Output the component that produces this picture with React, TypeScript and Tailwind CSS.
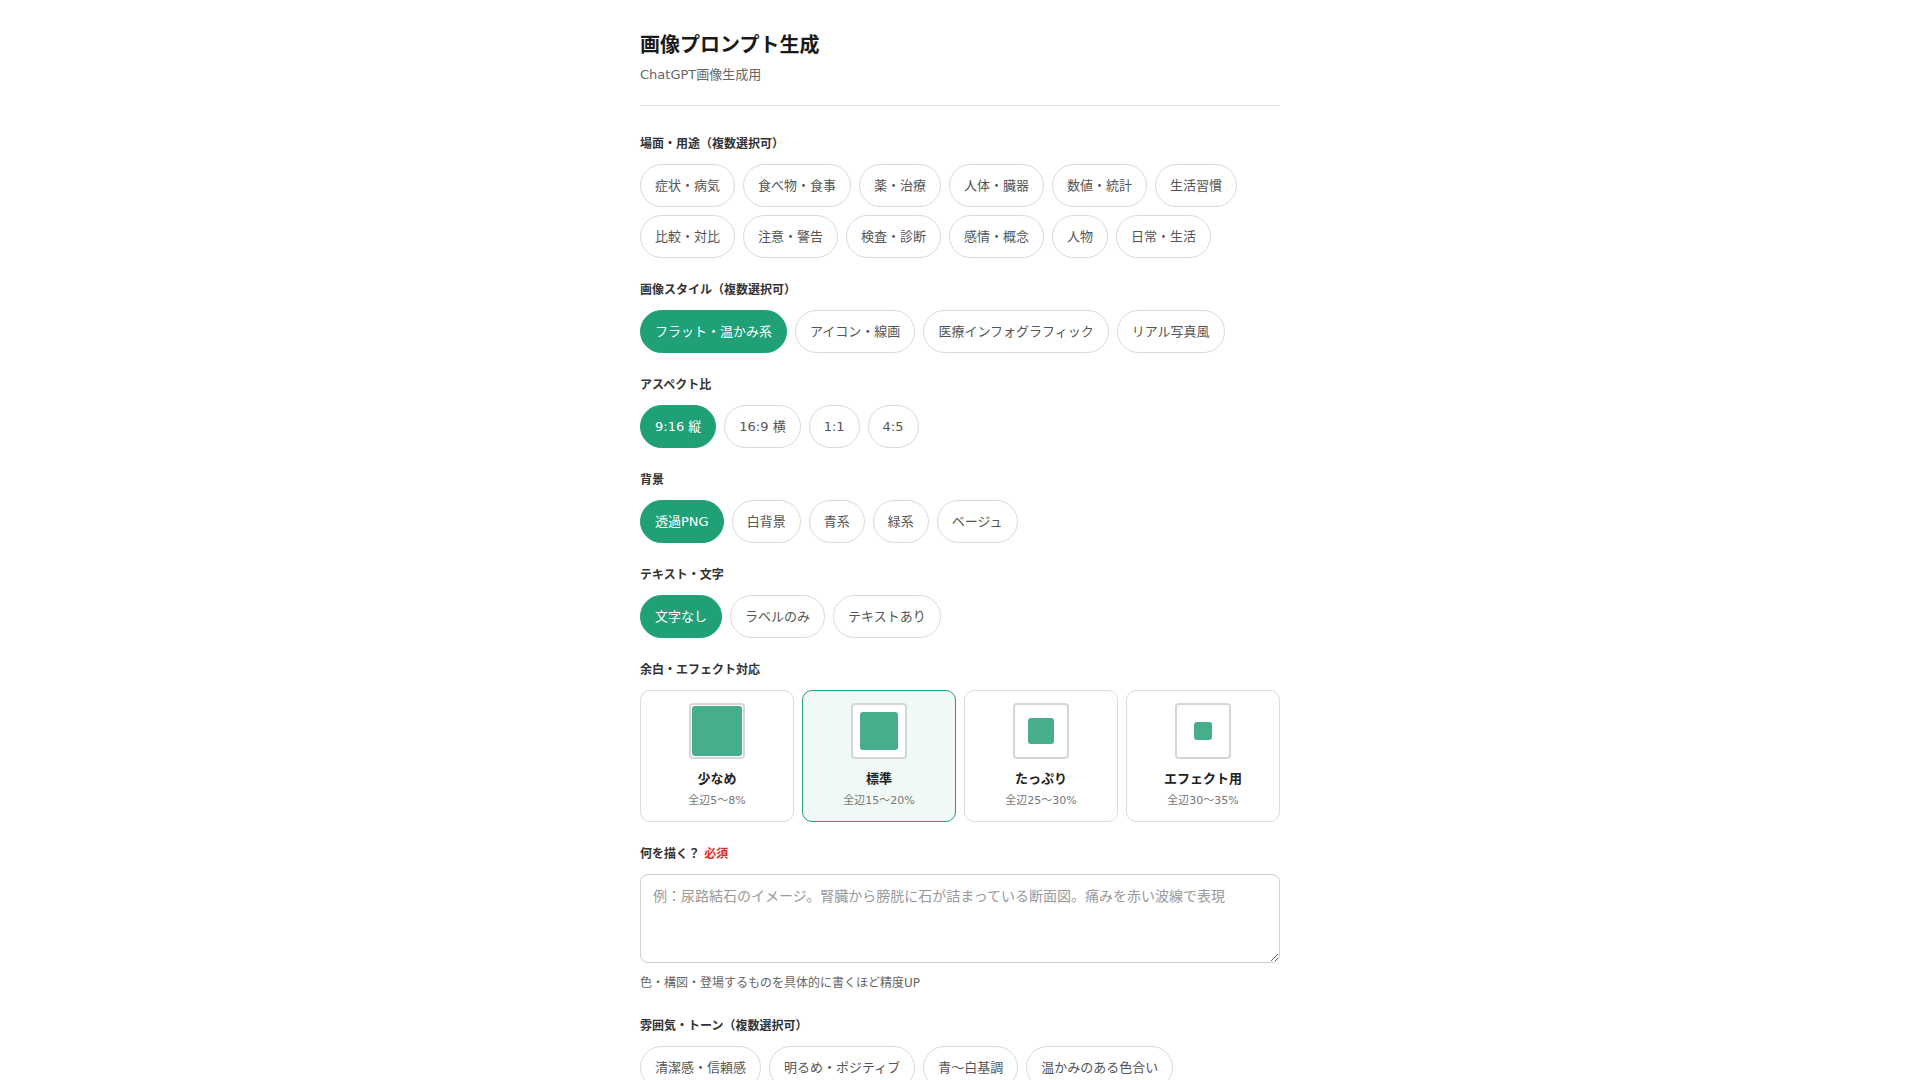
import React, { useState } from 'react';

const GREEN = 'bg-[#20a077] border-[#20a077] text-white';

const Chip: React.FC<{ label: string; active?: boolean; onClick?: () => void }> = ({ label, active, onClick }) => (
  <button
    type="button"
    onClick={onClick}
    className={`rounded-full border px-3.5 py-2.5 text-[13px] leading-[21px] whitespace-nowrap ${
      active ? GREEN : 'bg-white border-[#d9d9d9] text-[#555]'
    }`}
  >
    {label}
  </button>
);

const Label: React.FC<{ children: React.ReactNode }> = ({ children }) => (
  <div className="mb-3 text-xs font-bold leading-4 text-[#333]">{children}</div>
);

const ChipGroup: React.FC<{ title: string; items: string[]; initial: string[]; multi?: boolean }> = ({ title, items, initial, multi }) => {
  const [selected, setSelected] = useState<string[]>(initial);
  const toggle = (item: string) => {
    if (multi) {
      setSelected((prev) => (prev.includes(item) ? prev.filter((p) => p !== item) : [...prev, item]));
    } else {
      setSelected([item]);
    }
  };
  return (
    <section className="mb-6">
      <Label>{title}</Label>
      <div className="flex flex-wrap gap-2">
        {items.map((item) => (
          <Chip key={item} label={item} active={selected.includes(item)} onClick={() => toggle(item)} />
        ))}
      </div>
    </section>
  );
};

const margins = [
  { name: '少なめ', note: '全辺5〜8%', size: 'w-[50px] h-[50px]' },
  { name: '標準', note: '全辺15〜20%', size: 'w-[38px] h-[38px]' },
  { name: 'たっぷり', note: '全辺25〜30%', size: 'w-[26px] h-[26px]' },
  { name: 'エフェクト用', note: '全辺30〜35%', size: 'w-[18px] h-[18px]' },
];

export default function App() {
  const [margin, setMargin] = useState('標準');

  return (
    <div className="min-h-screen bg-white font-['DejaVu_Sans','Noto_Sans_CJK_JP',sans-serif] text-[#222]">
      <div className="mx-auto w-[640px] pt-[31px] pb-24">
        <header className="mb-[30px] border-b border-[#e2e2e2] pb-5">
          <h1 className="text-xl font-bold leading-7 text-[#1a1a1a]">画像プロンプト生成</h1>
          <p className="mt-1.5 text-[13px] leading-5 text-[#666]">ChatGPT画像生成用</p>
        </header>

        <ChipGroup
          title="場面・用途（複数選択可）"
          multi
          initial={[]}
          items={['症状・病気', '食べ物・食事', '薬・治療', '人体・臓器', '数値・統計', '生活習慣', '比較・対比', '注意・警告', '検査・診断', '感情・概念', '人物', '日常・生活']}
        />
        <ChipGroup
          title="画像スタイル（複数選択可）"
          multi
          initial={['フラット・温かみ系']}
          items={['フラット・温かみ系', 'アイコン・線画', '医療インフォグラフィック', 'リアル写真風']}
        />
        <ChipGroup title="アスペクト比" initial={['9:16 縦']} items={['9:16 縦', '16:9 横', '1:1', '4:5']} />
        <ChipGroup title="背景" initial={['透過PNG']} items={['透過PNG', '白背景', '青系', '緑系', 'ベージュ']} />
        <ChipGroup title="テキスト・文字" initial={['文字なし']} items={['文字なし', 'ラベルのみ', 'テキストあり']} />

        <section className="mb-6">
          <Label>余白・エフェクト対応</Label>
          <div className="grid grid-cols-4 gap-2">
            {margins.map((m) => {
              const active = margin === m.name;
              return (
                <button
                  key={m.name}
                  type="button"
                  onClick={() => setMargin(m.name)}
                  className={`flex flex-col items-center rounded-[10px] border pt-3 pb-3 ${
                    active ? 'border-[#2a9d78] bg-[#f0f9f6]' : 'border-[#dcdcdc] bg-white'
                  }`}
                >
                  <div className="flex h-14 w-14 items-center justify-center rounded-[4px] border-2 border-[#d6d6d6] bg-white">
                    <div className={`${m.size} rounded-[3px] bg-[#46ae8c]`} />
                  </div>
                  <div className="mt-2.5 text-[13px] font-bold leading-5 text-[#222]">{m.name}</div>
                  <div className="mt-1 text-[11px] leading-4 text-[#777]">{m.note}</div>
                </button>
              );
            })}
          </div>
        </section>

        <section className="mb-[27px]">
          <Label>
            何を描く？ <span className="text-[#d93025]">必須</span>
          </Label>
          <textarea
            rows={3}
            placeholder="例：尿路結石のイメージ。腎臓から膀胱に石が詰まっている断面図。痛みを赤い波線で表現"
            className="block w-full rounded-lg border border-[#d0d0d0] px-3 py-2.5 text-sm leading-[1.6] text-[#222] outline-none placeholder:text-[#999]"
          />
          <p className="mt-3 text-xs leading-4 text-[#666]">色・構図・登場するものを具体的に書くほど精度UP</p>
        </section>

        <ChipGroup
          title="雰囲気・トーン（複数選択可）"
          multi
          initial={[]}
          items={['清潔感・信頼感', '明るめ・ポジティブ', '青〜白基調', '温かみのある色合い']}
        />
      </div>
    </div>
  );
}
